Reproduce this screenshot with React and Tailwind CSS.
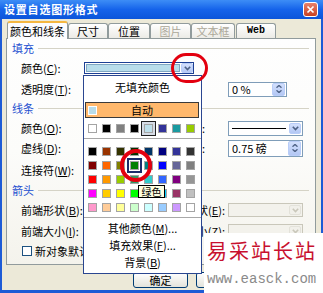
import React from "react";

const RECENT = [ "#FFFFFF", "#000000", "#808080", "#000000", "#BEE0EC", "#333399", "#1A9AA0", "#99CC00" ];

const GRID = [
    [ "#000000", "#993300", "#333300", "#003300", "#003366", "#000080", "#333399", "#333333" ],
    [ "#800000", "#FF6600", "#808000", "#008000", "#008080", "#0000FF", "#666699", "#808080" ],
    [ "#FF0000", "#FF9900", "#99CC00", "#339966", "#33CCCC", "#3366FF", "#800080", "#969696" ],
    [ "#FF00FF", "#FFCC00", "#FFFF00", "#00FF00", "#00FFFF", "#00CCFF", "#993366", "#C0C0C0" ],
    [ "#FF99CC", "#FFCC99", "#FFFF99", "#CCFFCC", "#CCFFFF", "#99CCFF", "#CC99FF", "#FFFFFF" ],
];

const Chevron = ( { color = "#4D6185" } ) => (
    <svg width="7" height="5" viewBox="0 0 7 5">
        <path d="M0.8 0.8 L3.5 3.6 L6.2 0.8" fill="none" stroke={ color } strokeWidth="1.6" />
    </svg>
);

const DropButton = ( { disabled } ) => (
    <span className={ `w-[12px] h-full flex items-center justify-center rounded-[2px] border ${ disabled ? "bg-[#F1F0EA] border-[#E3E2DA]" : "bg-gradient-to-b from-[#D3E0FD] to-[#B3C7F4] border-[#B9CDF8]" }` }>
        <Chevron color={ disabled ? "#C9C7BA" : "#4D6185" } />
    </span>
);

const SpinButton = () => (
    <span className="w-[13px] h-full flex flex-col items-center justify-center gap-[2px] rounded-[2px] bg-gradient-to-b from-[#D3E0FD] to-[#B3C7F4] border border-[#B9CDF8]">
        <svg width="6" height="3" viewBox="0 0 6 3"><path d="M0.5 2.7 L3 0.4 L5.5 2.7" fill="none" stroke="#4D6185" strokeWidth="1.3" /></svg>
        <svg width="6" height="3" viewBox="0 0 6 3"><path d="M0.5 0.3 L3 2.6 L5.5 0.3" fill="none" stroke="#4D6185" strokeWidth="1.3" /></svg>
    </span>
);

const Section = ( { title, h = "h-[18px]" } ) => (
    <div className={ `${ h } flex items-center pl-[5px] pr-[6px]` }>
        <span className="text-[#1D50D0]">{ title }</span>
        <span className="flex-1 h-px ml-[4px] bg-[#D5D3C6]" />
    </div>
);

const Label = ( { text, k } ) => (
    <span className="whitespace-nowrap">
        { text }(<u>{ k }</u>):
    </span>
);

const Swatch = ( { color, sel } ) => (
    <span
        className={ `block w-[9px] h-[9px] border border-[#A4A4A4] ${ sel === "recent" ? "shadow-[0_0_0_2px_#D6DCE6,0_0_0_3px_#222222]" : "" } ${ sel === "grid" ? "shadow-[0_0_0_1px_#ffffff,0_0_0_3px_#1B2C6B]" : "" }` }
        style={ { backgroundColor: color } }
    />
);

const Tab = ( { label, w, active, disabled } ) =>
{
    if ( active )
    {
        return (
            <div className={ `${ w } h-[18px] -mb-px relative z-10 flex items-center justify-center bg-[#FCFCFE] border border-b-0 border-[#919B9C] border-t-2 border-t-[#F5B740] rounded-t-[3px]` }>
                { label }
            </div>
        );
    }
    return (
        <div className={ `${ w } h-[15px] flex items-center justify-center bg-gradient-to-b from-white to-[#ECEBE6] border border-b-0 border-[#919B9C] rounded-t-[3px] ${ disabled ? "text-[#ACA899]" : "" }` }>
            { label }
        </div>
    );
};

const App = () =>
{
    return (
        <div className="relative w-[323px] h-[293px] overflow-hidden bg-[#1D5BD6] font-['Noto_Sans_CJK_SC',sans-serif] text-[11px] leading-none text-black">
            {/* title bar */ }
            <div className="h-[19px] flex items-center justify-between pl-[4px] pr-[5px] bg-gradient-to-b from-[#3D8DF6] via-[#1563EA] to-[#0B55DA]">
                <span className="text-white font-bold text-[11px] tracking-[0.8px]">设置自选图形格式</span>
                <span className="w-[15px] h-[15px] flex items-center justify-center rounded-[3px] border border-white bg-gradient-to-b from-[#E8806A] to-[#C9401F]">
                    <svg width="9" height="9" viewBox="0 0 9 9">
                        <path d="M1.5 1.5 L7.5 7.5 M7.5 1.5 L1.5 7.5" stroke="#fff" strokeWidth="1.7" />
                    </svg>
                </span>
            </div>

            {/* body */ }
            <div className="mx-[2px] h-[271px] bg-[#ECE9D8] flex flex-col px-[4px] pt-[2px]">
                <div className="flex items-end h-[17px] pl-[1px]">
                    <Tab label="颜色和线条" w="w-[61px]" active />
                    <Tab label="尺寸" w="w-[40px]" />
                    <Tab label="位置" w="w-[42px]" />
                    <Tab label="图片" w="w-[41px]" disabled />
                    <Tab label="文本框" w="w-[44px]" disabled />
                    <Tab label={ <span className="font-bold font-['Liberation_Mono',monospace] text-[10px]">Web</span> } w="w-[40px] ml-[1px]" />
                </div>

                <div className="w-[310px] h-[227px] border border-[#919B9C] bg-gradient-to-b from-[#FEFEFE] via-[#FCFCFA] to-[#F4F3EC] flex flex-col">
                    <Section title="填充" />

                    <div className="h-[22px] flex items-center">
                        <span className="w-[77px] pl-[14px]"><Label text="颜色" k="C" /></span>
                        <span className="w-[110px] h-[12px] flex border border-[#1C3F94] bg-white">
                            <span className="flex-1 m-[1px] bg-[#B8DDEB] border border-[#7FA7C2]" />
                            <DropButton />
                        </span>
                    </div>

                    <div className="h-[20px] flex items-center">
                        <span className="w-[77px] pl-[14px]"><Label text="透明度" k="T" /></span>
                        <span className="w-[144px]" />
                        <span className="w-[59px] h-[15px] flex items-center border border-[#7F9DB9] bg-white pl-[3px] pr-px">
                            <span className="flex-1">0 %</span>
                            <SpinButton />
                        </span>
                    </div>

                    <Section title="线条" />

                    <div className="h-[22px] flex items-center">
                        <span className="w-[77px] pl-[14px]"><Label text="颜色" k="O" /></span>
                        <span className="w-[121px] text-right"><Label text="样式" k="S" /></span>
                        <span className="w-[23px]" />
                        <span className="w-[75px] h-[15px] flex items-center border border-[#7F9DB9] bg-white pl-[3px] pr-px py-px">
                            <span className="flex-1 h-px bg-black mr-[3px]" />
                            <DropButton />
                        </span>
                    </div>

                    <div className="h-[18px] flex items-center">
                        <span className="w-[77px] pl-[14px]"><Label text="虚线" k="D" /></span>
                        <span className="w-[121px] text-right"><Label text="粗细" k="W" /></span>
                        <span className="w-[23px]" />
                        <span className="w-[75px] h-[17px] flex items-center border border-[#7F9DB9] bg-white pl-[3px] pr-px">
                            <span className="flex-1">0.75 磅</span>
                            <SpinButton />
                        </span>
                    </div>

                    <div className="h-[26px] flex items-center">
                        <span className="w-[77px] pl-[14px]"><Label text="连接符" k="W" /></span>
                    </div>

                    <Section title="箭头" h="h-[14px]" />

                    <div className="h-[26px] flex items-center">
                        <span className="w-[77px] pl-[14px]"><Label text="前端形状" k="B" /></span>
                        <span className="w-[141px] text-right"><Label text="后端形状" k="E" /></span>
                        <span className="w-[3px]" />
                        <span className="w-[75px] h-[14px] flex items-center border border-[#C9C7BA] bg-[#F3F2EC] pr-px py-px">
                            <span className="flex-1" />
                            <DropButton disabled />
                        </span>
                    </div>

                    <div className="h-[16px] flex items-center">
                        <span className="w-[77px] pl-[14px]"><Label text="前端大小" k="I" /></span>
                        <span className="w-[141px] text-right"><Label text="后端大小" k="Z" /></span>
                        <span className="w-[3px]" />
                        <span className="w-[75px] h-[14px] flex items-center border border-[#C9C7BA] bg-[#F3F2EC] pr-px py-px">
                            <span className="flex-1" />
                            <DropButton disabled />
                        </span>
                    </div>

                    <div className="h-[24px] flex items-center pl-[15px]">
                        <span className="w-[10px] h-[10px] border border-[#1C5180] bg-white" />
                        <span className="ml-[3px] whitespace-nowrap">新对象默认值(<u>F</u>)</span>
                    </div>
                </div>

                <div className="mt-[7px] flex pl-[127px] gap-[8px]">
                    <span className="w-[55px] h-[16px] flex items-center justify-center rounded-[3px] border border-[#003C74] bg-gradient-to-b from-white to-[#E3E3DB]">确定</span>
                    <span className="w-[55px] h-[16px] flex items-center justify-center rounded-[3px] border border-[#003C74] bg-gradient-to-b from-white to-[#E3E3DB]">取消</span>
                </div>
            </div>

            {/* color popup */ }
            <div className="absolute left-[83px] top-[75px] w-[119px] h-[199px] border border-[#2A4690] bg-white flex flex-col">
                <div className="h-[22px] flex items-center justify-center">无填充颜色</div>
                <div className="mt-[4px] ml-px mr-[2px] h-[16px] relative flex items-center justify-center bg-[#FFB86C] border border-[#3A3A3A]">
                    <span className="absolute left-[2px] w-[9px] h-[9px] bg-[#B8DCEA] border border-white" />
                    自动
                </div>
                <div className="mt-[2px] h-[16px] flex items-center pl-[4px] gap-[5px]">
                    { RECENT.map( ( c, i ) => (
                        <Swatch key={ i } color={ c } sel={ i === 4 ? "recent" : null } />
                    ) ) }
                </div>
                <div className="mt-[2px] h-px bg-[#A8A8A8]" />
                <div className="mt-[8px] pl-[4px] flex flex-col gap-[5px]">
                    { GRID.map( ( row, r ) => (
                        <div key={ r } className="flex gap-[5px]">
                            { row.map( ( c, i ) => (
                                <Swatch key={ i } color={ c } sel={ r === 1 && i === 3 ? "grid" : null } />
                            ) ) }
                        </div>
                    ) ) }
                </div>
                <div className="mt-[5px] h-px bg-[#A8A8A8]" />
                <div className="mt-[2px] h-[17px] flex items-center justify-center">其他颜色(<u>M</u>)...</div>
                <div className="h-[17px] flex items-center justify-center">填充效果(<u>F</u>)...</div>
                <div className="h-[17px] flex items-center justify-center">背景(<u>B</u>)</div>
            </div>

            {/* tooltip */ }
            <div className="absolute left-[138px] top-[185px] w-[27px] h-[13px] flex items-center justify-center bg-[#FFFFE1] border border-black text-[10px]">绿色</div>

            {/* red marks */ }
            <div className="absolute left-[171px] top-[53px] w-[37px] h-[30px] rounded-full border-[3px] border-[#E3000F]" />
            <div className="absolute left-[120px] top-[149px] w-[32px] h-[33px] rounded-full border-[4px] border-[#E3000F]" />

            {/* watermark */ }
            <div className="absolute left-[204px] top-[233px] right-0 bottom-0 bg-white flex flex-col pl-[3px] pt-[6px] whitespace-nowrap">
                <span className="text-[#C8102E] text-[20px] tracking-[2px] leading-[24px]">易采站长站</span>
                <span className="mt-[9px] text-[#8A8A8A] text-[14px] leading-[14px] font-['Liberation_Mono',monospace]">www.easck.com</span>
            </div>
        </div>
    );
};

export default App;
